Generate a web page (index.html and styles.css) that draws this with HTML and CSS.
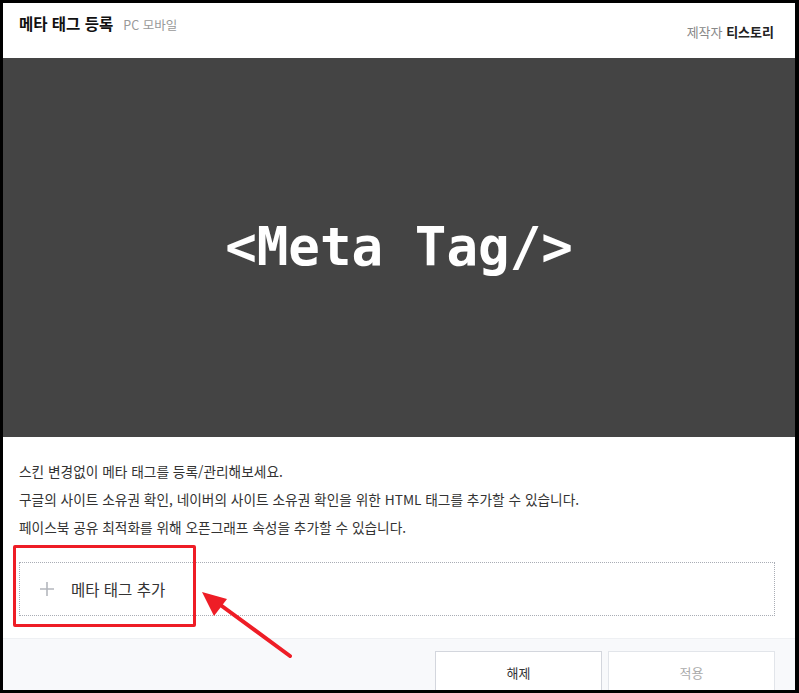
FILE: index.html
```html
<!DOCTYPE html>
<html lang="ko">
<head>
<meta charset="utf-8">
<title>메타 태그 등록</title>
<link rel="stylesheet" href="styles.css">
</head>
<body>
<div class="frame">
  <header class="header">
    <div class="title-group">
      <h1 class="title">메타 태그 등록</h1>
      <span class="platform">PC 모바일</span>
    </div>
    <div class="maker"><span class="maker-label">제작자</span> <strong class="maker-name">티스토리</strong></div>
  </header>
  <section class="banner">
    <span class="banner-text">&lt;Meta Tag/&gt;</span>
  </section>
  <section class="content">
    <p class="desc">스킨 변경없이 메타 태그를 등록/관리해보세요.</p>
    <p class="desc">구글의 사이트 소유권 확인, 네이버의 사이트 소유권 확인을 위한 HTML 태그를 추가할 수 있습니다.</p>
    <p class="desc">페이스북 공유 최적화를 위해 오픈그래프 속성을 추가할 수 있습니다.</p>
    <div class="add-box">
      <svg class="plus" width="14" height="14" viewBox="0 0 14 14"><path d="M7 0V14M0 7H14" stroke="#b4b7bd" stroke-width="1.6"/></svg>
      <span class="add-label">메타 태그 추가</span>
    </div>
  </section>
  <footer class="footer">
    <button class="btn">해제</button>
    <button class="btn btn-disabled">적용</button>
  </footer>
  <div class="highlight"></div>
  <svg class="arrow" width="792" height="687" viewBox="0 0 792 687">
    <line x1="287" y1="653" x2="212" y2="598" stroke="#ee1d26" stroke-width="4" stroke-linecap="round"/>
    <polygon points="199,589 224,596 211,613" fill="#ee1d26"/>
  </svg>
</div>
</body>
</html>
```

FILE: styles.css
```css
html, body {
  margin: 0;
  padding: 0;
}
body {
  background: #000;
  width: 799px;
  height: 693px;
  overflow: hidden;
  font-family: "Noto Sans CJK KR", "Noto Sans", sans-serif;
  color: #333;
}
.frame {
  position: relative;
  margin: 3px 4px 3px 3px;
  width: 792px;
  height: 687px;
  background: #fff;
  overflow: hidden;
  display: flex;
  flex-direction: column;
}
.header {
  height: 55px;
  box-sizing: border-box;
  padding: 9px 21px 0 16px;
  display: flex;
  justify-content: space-between;
  align-items: flex-start;
  flex-shrink: 0;
}
.title-group {
  display: flex;
  align-items: baseline;
  gap: 10px;
}
.title {
  margin: 0;
  font-size: 15.5px;
  font-weight: 700;
  color: #111;
  line-height: 22px;
}
.platform {
  font-size: 12.5px;
  color: #999;
}
.maker {
  font-size: 13px;
  line-height: 20px;
  padding-top: 10px;
}
.maker-label {
  color: #888;
}
.maker-name {
  color: #222;
  font-weight: 700;
}
.banner {
  height: 379px;
  flex-shrink: 0;
  background: #444444;
  display: flex;
  align-items: center;
  justify-content: center;
}
.banner-text {
  font-family: "DejaVu Sans Mono", monospace;
  font-weight: 700;
  font-size: 52.5px;
  color: #fff;
  line-height: 1;
}
.content {
  padding: 20px 20px 22px 16px;
  flex-shrink: 0;
}
.desc {
  margin: 0;
  font-size: 13.7px;
  line-height: 28px;
  color: #333;
}
.add-box {
  margin-top: 21px;
  height: 54px;
  box-sizing: border-box;
  border: 1px dotted #a9adb5;
  display: flex;
  align-items: center;
  padding-left: 20px;
  gap: 17px;
}
.plus {
  display: block;
}
.add-label {
  font-size: 15.5px;
  color: #333;
}
.footer {
  flex: 1;
  border-top: 1px solid #eef0f3;
  background: #f8f9fb;
  padding: 12px 20px 0 0;
  display: flex;
  justify-content: flex-end;
  gap: 6px;
}
.btn {
  width: 167px;
  height: 42px;
  background: #fff;
  border: 1px solid #d3d6dd;
  font-family: "Noto Sans CJK KR", sans-serif;
  font-size: 13px;
  color: #333;
  padding: 0;
}
.btn-disabled {
  color: #aaa;
  border-color: #e2e5ea;
}
.highlight {
  position: absolute;
  left: 10px;
  top: 542px;
  width: 183px;
  height: 82px;
  box-sizing: border-box;
  border: 3px solid #ee1d26;
  border-radius: 2px;
}
.arrow {
  position: absolute;
  left: 0;
  top: 0;
  pointer-events: none;
}
```
